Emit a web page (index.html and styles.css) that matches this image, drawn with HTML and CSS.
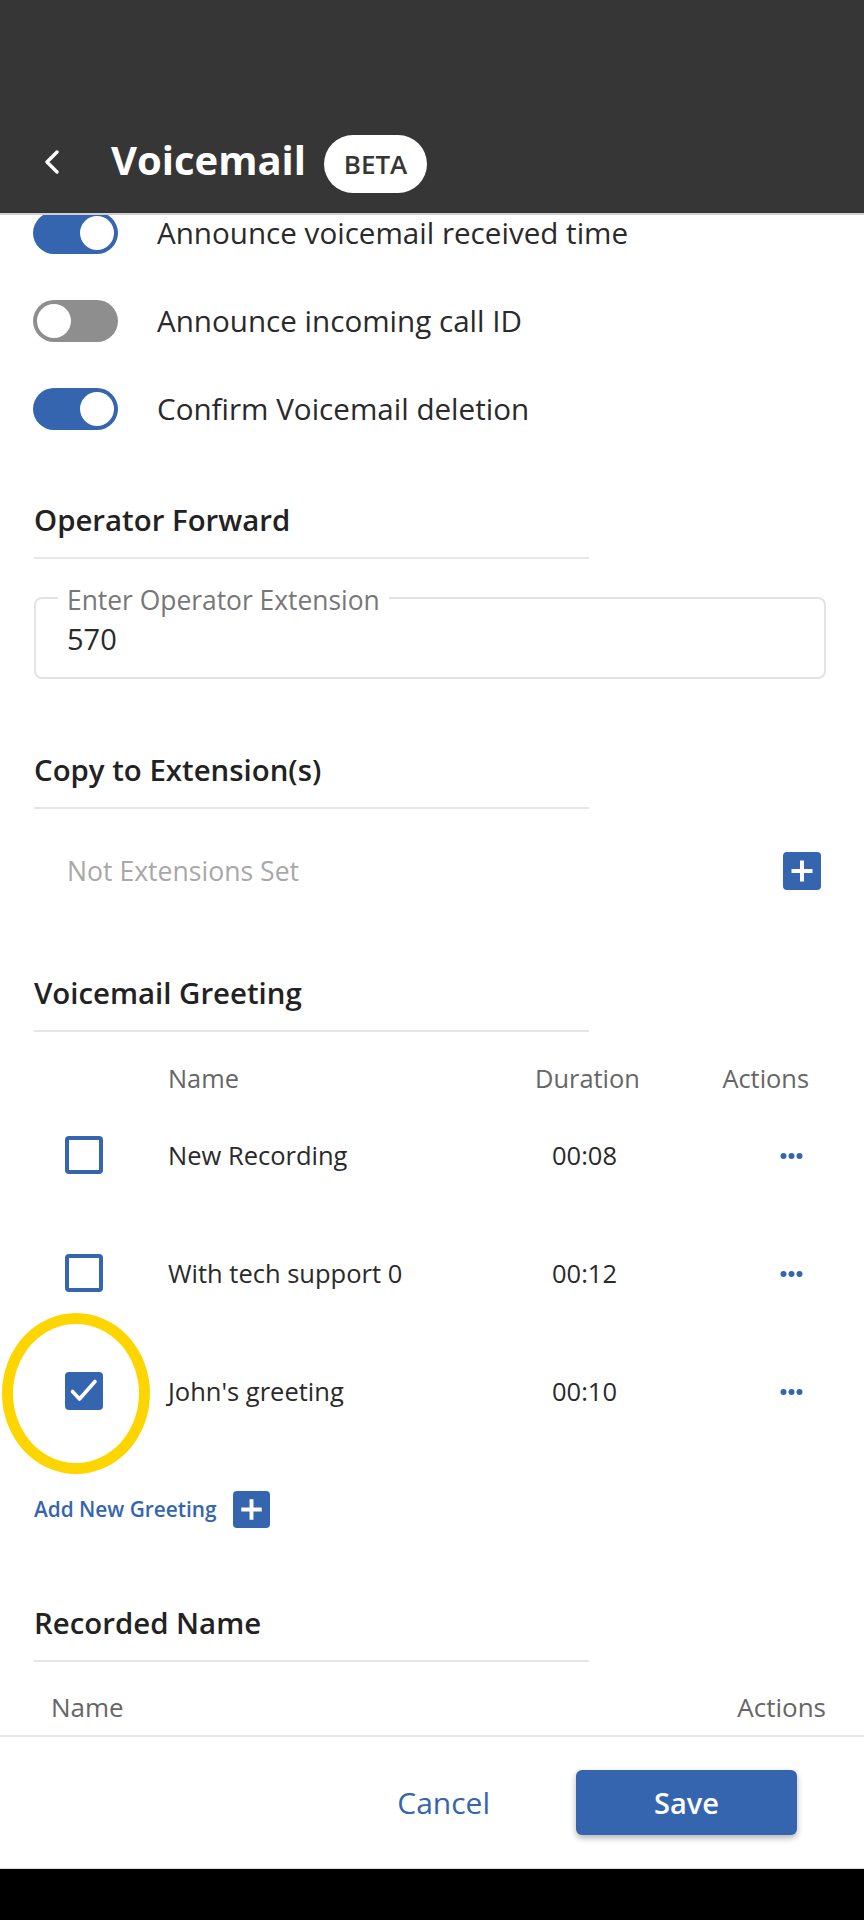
FILE: index.html
```html
<!DOCTYPE html>
<html lang=en>
<head>
	<meta charset="UTF-8">
	<title>Voicemail</title>
	<link rel="stylesheet" href="styles.css">
</head><body>
<div class=AppBar>
	<div class=BarRow>
		<svg class=Back width=15 height=24 viewBox="0 0 15 24"><path d="M13 2 L3 12 L13 22" fill=none stroke="#fff" stroke-width=3.4 stroke-linecap=round stroke-linejoin=round /></svg>
		<span class=Title>Voicemail</span>
		<span class=Beta>BETA</span>
	</div>
</div>

<div class=Screen>
<div class=Content>
	<div class=ToggleRow><span class="Toggle On"></span><span>Announce voicemail received time</span></div>
	<div class=ToggleRow><span class="Toggle"></span><span>Announce incoming call ID</span></div>
	<div class=ToggleRow><span class="Toggle On"></span><span>Confirm Voicemail deletion</span></div>

	<h2 class="SectionTitle First">Operator Forward</h2>
	<div class=Field>
		<span class=FieldLabel>Enter Operator Extension</span>
		<span class=FieldValue>570</span>
	</div>

	<h2 class="SectionTitle Copy">Copy to Extension(s)</h2>
	<div class=EmptyRow>
		<span>Not Extensions Set</span>
		<span class=Plus><svg width=38 height=38 viewBox="0 0 38 38"><path d="M19 8.5 V29.5 M8.5 19 H29.5" stroke="#fff" stroke-width=4 /></svg></span>
	</div>

	<h2 class="SectionTitle Greet">Voicemail Greeting</h2>
	<div class="Grid Head">
		<span></span><span>Name</span><span class=Dur>Duration</span><span class=Act>Actions</span>
	</div>
	<div class="Grid Row">
		<span><span class=Check></span></span><span>New Recording</span><span class=Dur>00:08</span>
		<span class=Dots><svg width=23 height=8 viewBox="0 0 23 8"><circle cx=3.5 cy=4 r=3 /><circle cx=11.5 cy=4 r=3 /><circle cx=19.5 cy=4 r=3 /></svg></span>
	</div>
	<div class="Grid Row">
		<span><span class=Check></span></span><span>With tech support 0</span><span class=Dur>00:12</span>
		<span class=Dots><svg width=23 height=8 viewBox="0 0 23 8"><circle cx=3.5 cy=4 r=3 /><circle cx=11.5 cy=4 r=3 /><circle cx=19.5 cy=4 r=3 /></svg></span>
	</div>
	<div class="Grid Row">
		<span><span class="Check Checked"><svg width=30 height=30 viewBox="0 0 30 30"><path d="M3.5 15.5 L10.5 23 L26 5.5" fill=none stroke="#fff" stroke-width=3.6 stroke-linecap=round stroke-linejoin=round /></svg></span></span>
		<span>John's greeting</span><span class=Dur>00:10</span>
		<span class=Dots><svg width=23 height=8 viewBox="0 0 23 8"><circle cx=3.5 cy=4 r=3 /><circle cx=11.5 cy=4 r=3 /><circle cx=19.5 cy=4 r=3 /></svg></span>
		<span class=Ring></span>
	</div>
	<div class=AddRow>
		<span>Add New Greeting</span>
		<span class=Plus><svg width=37 height=37 viewBox="0 0 38 38"><path d="M19 8.5 V29.5 M8.5 19 H29.5" stroke="#fff" stroke-width=4 /></svg></span>
	</div>

	<h2 class="SectionTitle Recorded">Recorded Name</h2>
	<div class=RecHead><span>Name</span><span>Actions</span></div>
</div>
</div>

<div class=Footer>
	<span class=Cancel>Cancel</span>
	<span class=Save>Save</span>
</div>
<div class=NavBar></div>
</body></html>
```

FILE: styles.css
```css
html, body { margin:0; }
body { width:864px; height:1920px; display:flex; flex-direction:column; font-family:"Open Sans", "Noto Sans", sans-serif; color:#2a2a2a; background:#fff; }

.AppBar { height:213px; background:#363636; border-bottom:2px solid #cfcfcf; box-sizing:content-box; flex:none; }
.BarRow { display:flex; align-items:center; height:58px; padding:135px 0 0 44px; }
.Back { margin:0 52px -1px 0; position:relative; top:-3px; }
.Title { color:#fff; font-weight:700; font-size:40px; line-height:58px; position:relative; top:-4px; }
.Beta { margin-left:18px; height:58px; width:103px; border-radius:29px; background:#fff; color:#363636; font-weight:600; font-size:26px; line-height:34px; display:flex; align-items:center; justify-content:center; }

.Screen { flex:1; overflow:hidden; }
.Content { margin-top:-26px; padding:0 38px 0 34px; }

.ToggleRow { height:88px; display:flex; align-items:center; gap:39px; font-size:29.6px; line-height:34px; }
.Toggle { width:85px; height:42px; border-radius:21px; background:#8e8e8e; position:relative; flex:none; margin-left:-1px; }
.Toggle:after { content:""; position:absolute; top:4px; left:4px; width:34px; height:34px; border-radius:50%; background:#fff; }
.Toggle.On { background:#3565ae; }
.Toggle.On:after { left:auto; right:4px; }

.SectionTitle { margin:0; width:555px; font-size:29.4px; font-weight:600; line-height:40px; padding-bottom:17px; border-bottom:2px solid #e6e6e6; color:#222; }
.First { margin-top:47px; }
.Copy { margin-top:71px; }
.Greet { margin-top:72px; }
.Recorded { margin-top:74px; }

.Field { margin-top:38px; height:78px; border:2px solid #e3e3e3; border-radius:8px; position:relative; padding-left:31px; display:flex; align-items:center; }
.FieldLabel { position:absolute; left:22px; top:-16px; padding:0 9px; background:#fff; color:#777; font-size:26.4px; line-height:34px; }
.FieldValue { font-size:29px; margin-top:0; }

.EmptyRow { margin-top:32px; height:60px; display:flex; align-items:center; justify-content:space-between; padding:0 5px 0 33px; color:#a8a8a8; font-size:26.6px; }
.Plus { width:38px; height:38px; background:#3565ae; border-radius:4px; display:flex; }
.AddRow .Plus { width:37px; height:37px; }

.Grid { display:grid; grid-template-columns:134px 352px 135px 1fr; align-items:center; }
.Head { margin-top:20px; padding-top:8px; line-height:36px; font-size:25.4px; color:#666; }
.Row { height:118px; font-size:25.5px; position:relative; }
.Dur { text-align:center; }
.Head .Act { text-align:right; padding-right:17px; }
.Row .Dur { padding-right:6px; }
.Dots { text-align:right; padding-right:23px; fill:#3565ae; line-height:0; }
.Check { display:block; margin-left:31px; width:30px; height:30px; border:4px solid #3565ae; border-radius:4px; }
.Check.Checked { background:#3565ae; }
.Ring { position:absolute; left:-32px; top:-19px; width:126px; height:139px; border:11px solid #ffd500; border-radius:50%; }

.AddRow { margin-top:39px; height:40px; display:flex; align-items:center; gap:17px; color:#3565ae; font-weight:600; font-size:20.8px; }

.RecHead { margin-top:25px; line-height:40px; display:flex; justify-content:space-between; padding-left:17px; font-size:26px; color:#666; }

.Footer { flex:none; height:131px; border-top:2px solid #e6e6e6; display:flex; align-items:center; justify-content:flex-end; padding-right:67px; }
.Cancel { color:#3565ae; font-size:30px; margin-right:86px; }
.Save { width:221px; height:65px; border-radius:6px; background:#3565ae; color:#fff; font-weight:600; font-size:29px; display:flex; align-items:center; justify-content:center; box-shadow:0 3px 6px rgba(0,0,0,.3); }
.NavBar { flex:none; height:51px; background:#000; border-top:1px solid #ddd; }
```
